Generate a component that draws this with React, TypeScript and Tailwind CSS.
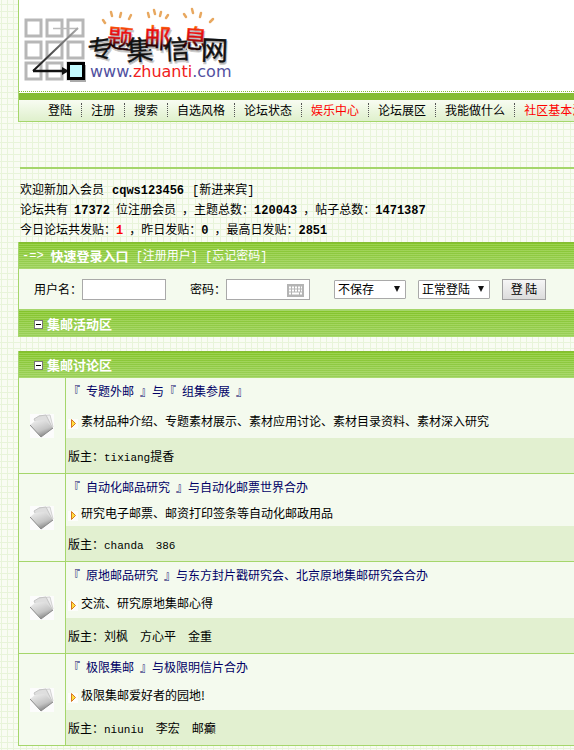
import { useState } from "react";

type Board = {
  title: string;
  desc: string;
  moderators: { name: string; suffix?: string }[];
  descHeight: string;
};

const NAV_ITEMS = [
  { label: "登陆" },
  { label: "注册" },
  { label: "搜索" },
  { label: "自选风格" },
  { label: "论坛状态" },
  { label: "娱乐中心", hot: true },
  { label: "论坛展区" },
  { label: "我能做什么" },
  { label: "社区基本法", hot: true },
];

const BOARDS: Board[] = [
  {
    title: "『\u2002专题外邮\u2002』与『\u2002组集参展\u2002』",
    desc: "素材品种介绍、专题素材展示、素材应用讨论、素材目录资料、素材深入研究",
    moderators: [{ name: "tixiang", suffix: "提香" }],
    descHeight: "h-[34px]",
  },
  {
    title: "『\u2002自动化邮品研究\u2002』与自动化邮票世界合办",
    desc: "研究电子邮票、邮资打印签条等自动化邮政用品",
    moderators: [{ name: "chanda" }, { name: "386" }],
    descHeight: "h-[26px]",
  },
  {
    title: "『\u2002原地邮品研究\u2002』与东方封片戳研究会、北京原地集邮研究会合办",
    desc: "交流、研究原地集邮心得",
    moderators: [{ name: "刘枫" }, { name: "方心平" }, { name: "金重" }],
    descHeight: "h-[30px]",
  },
  {
    title: "『\u2002极限集邮\u2002』与极限明信片合办",
    desc: "极限集邮爱好者的园地!",
    moderators: [{ name: "niuniu" }, { name: "李宏" }, { name: "邮癫" }],
    descHeight: "h-[30px]",
  },
];

const LOGO_CHARS = [
  { char: "专", x: 88, y: 58, size: 25, rotate: -8 },
  { char: "题", x: 107, y: 48, size: 26, rotate: 4, hot: true },
  { char: "集", x: 126, y: 60, size: 27, rotate: -4 },
  { char: "邮", x: 144, y: 48, size: 27, rotate: 3, hot: true },
  { char: "信", x: 164, y: 59, size: 26, rotate: -3 },
  { char: "息", x: 182, y: 48, size: 26, rotate: 5, hot: true },
  { char: "网", x: 201, y: 60, size: 27, rotate: 2 },
];

// short strokes that fly up over the red characters
const SPARKS = [
  "M103 20l2 3", "M111 12l1 4", "M121 13l-1 4", "M131 15l-2 4",
  "M148 13l1 4", "M154 10l1 4", "M161 12l-1 4", "M168 15l-2 3",
  "M184 14l2 3", "M192 9l1 4", "M201 13l-1 4", "M213 19l-3 3",
];

const STRIPES =
  "bg-[repeating-linear-gradient(180deg,transparent_0_1px,#d0f0a04d_1px_2px),linear-gradient(180deg,#84c42a,#9bd05c)]";

function Logo() {
  return (
    <svg width="215" height="84" viewBox="19 0 215 84" role="img" aria-label="专题集邮信息网">
      <defs>
        <linearGradient id="hot" x1="0" y1="0" x2="0" y2="1">
          <stop offset="0.15" stopColor="#ffa000" />
          <stop offset="0.35" stopColor="#f01010" />
          <stop offset="0.55" stopColor="#d01010" />
          <stop offset="0.75" stopColor="#200000" />
        </linearGradient>
        <linearGradient id="trail" gradientUnits="userSpaceOnUse" x1="34" y1="71" x2="78" y2="28">
          <stop offset="0" stopColor="#111" />
          <stop offset="1" stopColor="#aaa" />
        </linearGradient>
      </defs>
      {[20, 42, 63].map((y) =>
        [26, 47, 68].map((x) => (
          <rect key={`${x}-${y}`} x={x} y={y} width="15" height="16" fill="#fff" stroke="#b7b7b7" strokeWidth="3" />
        )),
      )}
      <path d="M53 28.500h25" stroke="#bbb" strokeWidth="1.500" />
      <path d="M78 28L33 71" stroke="url(#trail)" strokeWidth="2" />
      <path d="M33 71h30" stroke="#111" strokeWidth="2.500" />
      <path d="M62 67l7 4-7 4z" fill="#111" />
      <rect x="70" y="65" width="16" height="17" fill="#aaa" />
      <rect x="68.500" y="63.500" width="15" height="15" fill="#c4fafe" stroke="#000" strokeWidth="3" />
      {SPARKS.map((d) => (
        <path key={d} d={d} stroke="#e8a860" strokeWidth="2.500" strokeLinecap="round" />
      ))}
      <g className="font-['Noto_Sans_CJK_SC',sans-serif]">
        {LOGO_CHARS.map(({ char, x, y, size, rotate, hot }) => (
          <g key={char} fontSize={size} transform={`rotate(${rotate} ${x + 12} ${y - 9})`}>
            <text x={x + 1} y={y + 2} fill="#aaa" stroke="#ccc" strokeWidth="1">
              {char}
            </text>
            <text x={x} y={y} fill={hot ? "url(#hot)" : "#111"} stroke={hot ? "url(#hot)" : "#111"} strokeWidth="0.400">
              {char}
            </text>
          </g>
        ))}
      </g>
      <text x="90" y="77" fontSize="16" className="font-['DejaVu_Sans',sans-serif]" fill="#5150a0">
        www.
        <tspan fill="#f02020">zhuanti</tspan>
        .com
      </text>
    </svg>
  );
}

function FolderIcon() {
  return (
    <svg width="24" height="24" viewBox="0 0 24 24" className="mx-auto" aria-hidden="true">
      <defs>
        <linearGradient id="folder" x1="0.2" y1="0" x2="0.7" y2="1">
          <stop offset="0" stopColor="#ededed" />
          <stop offset="0.6" stopColor="#c4c4c4" />
          <stop offset="1" stopColor="#777" />
        </linearGradient>
      </defs>
      <rect width="24" height="24" fill="#fcfcfc" />
      <path d="M9 2l11-1 3 12-8 6z" fill="#f0f0f0" stroke="#d2d2d2" />
      <path d="M4 5l5-3 7-1 6 12-10 7z" fill="#dedede" stroke="#c4c4c4" />
      <path d="M0 11l5-4 10-1 8 8-12 9z" fill="url(#folder)" />
      <path d="M0 11l11 12 12-9" fill="none" stroke="#8a8a8a" />
    </svg>
  );
}

function ArrowIcon() {
  return (
    <svg width="10" height="16" viewBox="0 0 10 16" className="shrink-0" aria-hidden="true">
      <rect y="6" width="10" height="10" fill="#fcfdfb" />
      <path d="M3.500 6.500v8l4-4z" fill="#ffe040" stroke="#d87820" />
    </svg>
  );
}

function SectionHeader({ title }: { title: string }) {
  const [open, setOpen] = useState(true);

  return (
    <h2 className="flex h-[26px] items-center gap-1 pl-[15px] text-[13px] font-bold text-white">
      <button
        type="button"
        aria-label={title}
        aria-expanded={open}
        onClick={() => setOpen(!open)}
        className="flex size-[9px] items-center justify-center border border-[#777] bg-white"
      >
        <span className="h-px w-[5px] bg-black" />
      </button>
      {title}
    </h2>
  );
}

function BracketLink({ href, children }: { href: string; children: string }) {
  return (
    <a href={href}>
      <span className="font-['Liberation_Mono',monospace]">[</span>
      {children}
      <span className="font-['Liberation_Mono',monospace]">]</span>
    </a>
  );
}

function DropDown({ label, options, name }: { label: string; options: string[]; name: string }) {
  return (
    <span className="relative flex">
      <select
        aria-label={label}
        name={name}
        className="h-[19px] w-[72px] appearance-none rounded-[1px] border border-[#a9a9a9] bg-white pl-[3px] leading-4 outline-none"
      >
        {options.map((option) => (
          <option key={option}>{option}</option>
        ))}
      </select>
      <svg width="6" height="6" viewBox="0 0 6 6" className="pointer-events-none absolute top-[6px] right-[6px]">
        <path d="M0 0h6L3 6z" fill="#111" />
      </svg>
    </span>
  );
}

function LoginForm() {
  return (
    <form
      onSubmit={(e) => e.preventDefault()}
      className="flex h-10 items-center bg-[#f4faee] pl-[15px] whitespace-nowrap"
    >
      <label htmlFor="username">用户名：</label>
      <input id="username" type="text" className="h-[21px] w-[84px] border border-[#a9a9a9] bg-white px-1 outline-none" />
      <label htmlFor="password" className="ml-6">
        密码：
      </label>
      <span className="relative flex">
        <input id="password" type="password" className="h-[21px] w-[84px] border border-[#a9a9a9] bg-white px-1 outline-none" />
        <svg width="17" height="13" viewBox="0 0 17 13" className="absolute top-[5px] right-[6px]" aria-hidden="true">
          <rect width="17" height="13" fill="#b4b4b4" />
          <path d="M2 3.500h13M2 6.500h13" stroke="#fff" strokeWidth="2" strokeDasharray="2 1" />
          <path d="M2 9.500h2M5 9.500h7M13 9.500h2" stroke="#fff" strokeWidth="2" />
        </svg>
      </span>
      <span className="ml-6 flex gap-3">
        <DropDown label="保存" name="cookie" options={["不保存", "保存一天", "保存一月"]} />
        <DropDown label="登陆方式" name="mode" options={["正常登陆", "隐身登陆"]} />
      </span>
      <button
        type="submit"
        className="ml-3 h-[21px] w-11 border border-[#a0a0a0] bg-linear-to-b from-[#f6f6f6] to-[#dcdcdc] leading-4"
      >
        登 陆
      </button>
    </form>
  );
}

function BoardRow({ board }: { board: Board }) {
  return (
    <tr>
      <td className="w-[47px] border-r border-b border-[#a5d66b] bg-[#f4faee] align-middle">
        <FolderIcon />
      </td>
      <td className="border-b border-[#a5d66b] bg-[#f4faee]">
        <div className="flex h-[26px] items-center pl-[2px]">
          <a href="#board" className="whitespace-nowrap text-[#000066]">
            {board.title}
          </a>
        </div>
        <div className={`flex items-center gap-[3px] pl-[2px] whitespace-nowrap ${board.descHeight}`}>
          <ArrowIcon />
          {board.desc}
        </div>
        <div className="flex h-[35px] items-center bg-[#e2f0d0] pl-[2px]">
          <div className="flex h-5 items-baseline">
            版主：
            <span className="flex items-baseline gap-3">
              {board.moderators.map(({ name, suffix }) => (
                <a key={name} href="#user">
                  {/^[a-z0-9]+$/.test(name) ? (
                    <span className="font-['Liberation_Mono',monospace] text-[11px] leading-4">{name}</span>
                  ) : (
                    name
                  )}
                  {suffix}
                </a>
              ))}
            </span>
          </div>
        </div>
      </td>
    </tr>
  );
}

function Count({ children, hot }: { children: string; hot?: boolean }) {
  return (
    <b className={`mr-[6px] font-['Liberation_Mono',monospace] ${hot ? "text-[#ff0000]" : ""}`}>{children}</b>
  );
}

export default function App() {
  return (
    <div className="min-h-screen overflow-x-hidden bg-[#f9fcf3] bg-[linear-gradient(90deg,transparent_1px,#e8f4da_1px_2px,transparent_2px_7px,#e8f4da_7px_8px,transparent_8px_13px,#e8f4da_13px_14px,transparent_14px_20px,#e8f4da_20px_21px,transparent_21px),linear-gradient(180deg,transparent_4px,#e8f4da_4px_5px,transparent_5px_11px,#e8f4da_11px_12px,transparent_12px_17px,#e8f4da_17px_18px,transparent_18px_23px,#e8f4da_23px_24px,transparent_24px)] bg-size-[25px_25px] pl-[18px] font-['Noto_Sans_CJK_SC',sans-serif] text-[12px] leading-5 text-black">
      <header className="border-b border-l border-[#a5d66b] bg-white">
        <div className="h-[92px] border-b border-dotted border-[#86bc35]">
          <Logo />
        </div>
        <div className="mt-px h-[7px] bg-[#86bc35]" />
        <nav className="flex h-[21px] items-center overflow-hidden bg-linear-to-b from-[#f8fcf2] to-[#dff0cc] pb-[2px] pl-[20px] whitespace-nowrap">
          {NAV_ITEMS.map((item, i) => (
            <a
              key={item.label}
              href="#nav"
              className={`shrink-0 px-[9px] leading-[14px] ${i > 0 ? "border-l border-dotted border-[#555]" : ""} ${item.hot ? "text-[#ff0000]" : ""}`}
            >
              {item.label}
            </a>
          ))}
        </nav>
      </header>

      <section className="mt-[45px] ml-[2px] border-t-2 border-[#a5d66b] pt-[10px] whitespace-nowrap">
        <p className="flex h-5 items-baseline">
          欢迎新加入会员
          <b className="mx-2 font-['Liberation_Mono',monospace]">cqws123456</b>
          <BracketLink href="#new">新进来宾</BracketLink>
        </p>
        <p className="flex h-5 items-baseline">
          论坛共有&ensp;<Count>17372</Count>位注册会员&ensp;，主题总数：<Count>120043</Count>，帖子总数：
          <Count>1471387</Count>
        </p>
        <p className="flex h-5 items-baseline">
          今日论坛共发贴：<Count hot>1</Count>，昨日发贴：<Count>0</Count>，最高日发贴：<Count>2851</Count>
        </p>
      </section>

      <main className="mt-[3px]">
        <section className="border-l border-[#a5d66b]">
          <div className={`flex h-[27px] items-center gap-[7px] border-t border-[#86bc35] pl-[3px] text-white ${STRIPES}`}>
            <span className="font-['Liberation_Mono',monospace]">-=&gt;</span>
            <b className="text-[13px]">快速登录入口</b>
            <BracketLink href="#register">注册用户</BracketLink>
            <BracketLink href="#forgot">忘记密码</BracketLink>
          </div>
          <LoginForm />
          <div className={`border-t-2 border-[#a5d66b] ${STRIPES}`}>
            <SectionHeader title="集邮活动区" />
          </div>
        </section>

        <section className="mt-[14px] border-l border-[#a5d66b]">
          <div className={`border-t border-[#86bc35] ${STRIPES}`}>
            <SectionHeader title="集邮讨论区" />
          </div>
          <table className="w-full border-separate border-spacing-0">
            <tbody>
              {BOARDS.map((board) => (
                <BoardRow key={board.title} board={board} />
              ))}
            </tbody>
          </table>
        </section>
      </main>
    </div>
  );
}
